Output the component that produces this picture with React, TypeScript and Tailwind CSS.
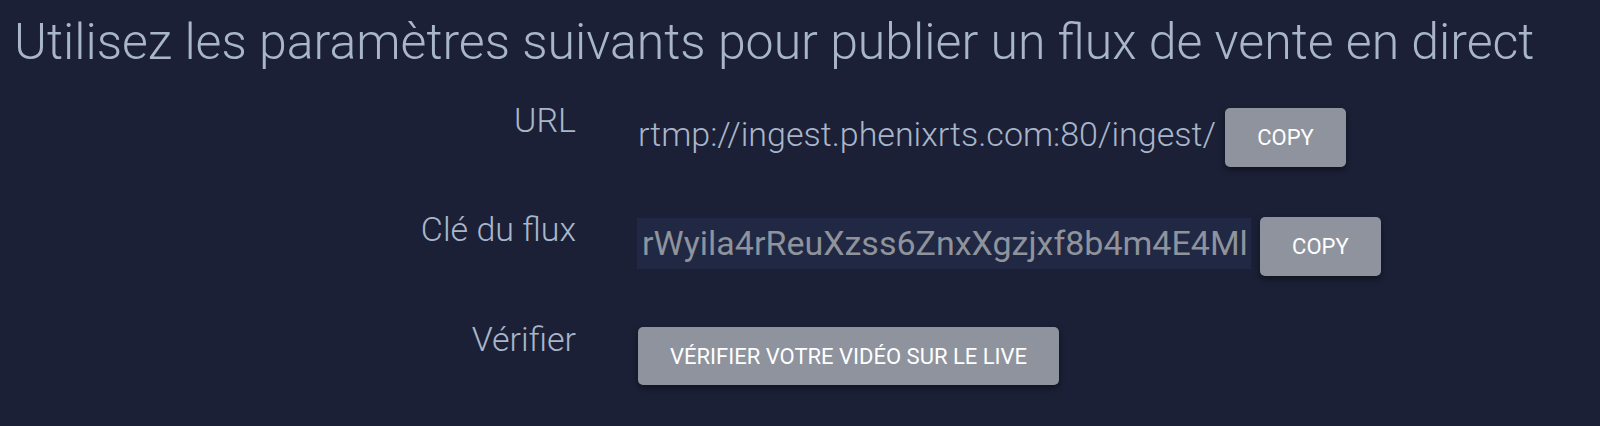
import React from "react";

const font = { fontFamily: "Roboto, 'Liberation Sans', sans-serif" };

function CopyBtn() {
  return (
    <button className="h-[59px] w-[121px] shrink-0 rounded-[5px] bg-[#8e939e] text-white text-[22px] font-normal uppercase shadow-[0_3px_6px_rgba(0,0,0,0.45)]">
      Copy
    </button>
  );
}

export default function App() {
  return (
    <div style={font} className="w-[1600px] h-[426px] bg-[#1b2036] overflow-hidden">
      <h1 className="pl-[14px] pt-[12px] whitespace-nowrap text-[50px] font-light leading-[60px] text-[#a9b6ca]">
        Utilisez les paramètres suivants pour publier un flux de vente en direct
      </h1>
      <div className="mt-[36px] grid grid-cols-[576px_1fr] gap-x-[62px] gap-y-[50px]">
        <div className="text-right text-[34px] font-light leading-[25px] text-[#a9b6ca]">URL</div>
        <div className="flex items-start gap-[9px]">
          <span className="whitespace-nowrap text-[34px] font-light leading-[52px] text-[#a9b6ca]">rtmp://ingest.phenixrts.com:80/ingest/</span>
          <CopyBtn />
        </div>
        <div className="text-right text-[34px] font-light leading-[25px] text-[#a9b6ca]">Clé du flux</div>
        <div className="flex items-start gap-[9px]">
          <span className="ml-[-1px] mt-[1px] h-[51px] whitespace-nowrap bg-[#212843] pl-[5px] pr-[3px] text-[34px] leading-[51px] text-[#8e939c]">
            rWyila4rReuXzss6ZnxXgzjxf8b4m4E4Ml
          </span>
          <CopyBtn />
        </div>
        <div className="mt-[1px] text-right text-[34px] font-light leading-[25px] text-[#a9b6ca]">Vérifier</div>
        <div className="mt-[1px]">
          <button className="h-[58px] px-[32px] rounded-[5px] bg-[#8e939e] text-white text-[22px] uppercase shadow-[0_3px_6px_rgba(0,0,0,0.45)]">
            Vérifier votre vidéo sur le live
          </button>
        </div>
      </div>
    </div>
  );
}
